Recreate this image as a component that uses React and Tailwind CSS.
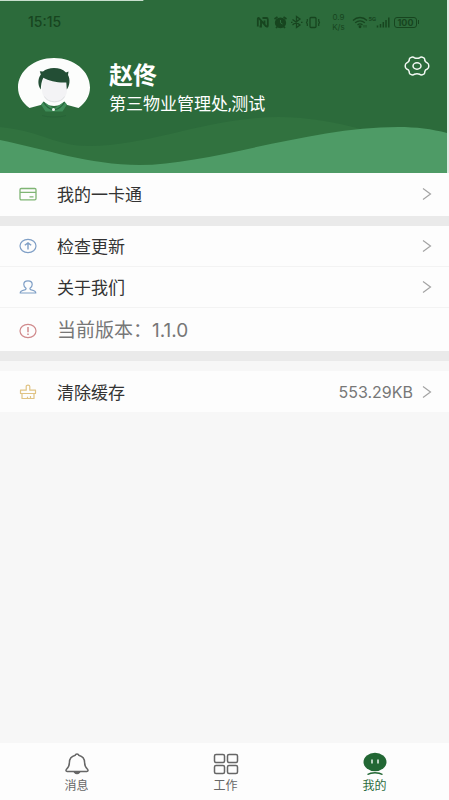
import React from "react";

const Chevron = () => (
  <svg className="h-4 w-3 shrink-0" viewBox="0 0 12 16" fill="none" stroke="#a3a3a3" strokeWidth="1.2" aria-hidden="true">
    <path d="M2 2.5 9.5 8 2 13.5" />
  </svg>
);

const CardIcon = () => (
  <svg className="h-5 w-5" viewBox="0 0 20 20" fill="none" stroke="#7fb574" strokeWidth="1.3" aria-hidden="true">
    <rect x="2" y="4.5" width="16" height="11.3" rx="1.2" />
    <path d="M2 8.3h16M11.5 12.8h4" />
  </svg>
);

const UpdateIcon = () => (
  <svg className="h-5 w-5" viewBox="0 0 20 20" fill="none" stroke="#7f9fc6" strokeWidth="1.2" aria-hidden="true">
    <ellipse cx="10" cy="10" rx="8" ry="6.6" />
    <path d="M10 13.6V7.2M6.8 9.3 10 6.9l3.2 2.4" strokeWidth="1.4" />
  </svg>
);

const PersonIcon = () => (
  <svg className="h-5 w-5" viewBox="0 0 20 20" fill="none" stroke="#7f9fc6" strokeWidth="1.2" strokeLinejoin="round" aria-hidden="true">
    <path d="M8 11.3C6.600 10.300 5.800 9 5.800 7.400c0-2.200 1.800-3.600 4.200-3.600s4.200 1.400 4.200 3.600c0 1.600-.8 2.900-2.200 3.900-.3.8.3 1.200 1.400 1.500 2.700.6 4.400 1.300 4.400 3.200H2.200c0-1.900 1.700-2.600 4.400-3.200 1.100-.3 1.700-.7 1.400-1.500Z" />
  </svg>
);

const InfoIcon = () => (
  <svg className="h-5 w-5" viewBox="0 0 20 20" fill="none" stroke="#d08a8c" strokeWidth="1.2" aria-hidden="true">
    <ellipse cx="10" cy="10" rx="8" ry="6.6" />
    <path d="M10 6v5.300M10 12.500v1.500" strokeWidth="1.5" />
  </svg>
);

const BrushIcon = () => (
  <svg className="h-5 w-5" viewBox="0 0 20 20" fill="none" stroke="#e0c384" strokeWidth="1.2" strokeLinejoin="round" aria-hidden="true">
    <path d="M8.200 8.200V4.400c0-.8.7-1.200 1.800-1.200s1.800.4 1.800 1.200v3.800h5.700v3.300h-15V8.200ZM4 11.500v5h12v-5M9.500 16.300v-1.500M12.500 16.300v-2.300" />
  </svg>
);

const GearIcon = () => (
  <svg className="h-6 w-7" viewBox="0 0 28 24" fill="none" stroke="#f2f8f3" strokeWidth="1.5" strokeLinejoin="round" aria-hidden="true">
    <path d="M8.800 3.200Q10.200 2.800 11.300 3.700Q14 5 16.700 3.700Q17.800 2.800 19.200 3.200L21.200 4.200Q22 5 21.700 6.200Q22 8.300 24.300 8.900Q25.800 9.600 25.800 12Q25.800 14.400 24.300 15.100Q22 15.700 21.700 17.800Q22 19 21.200 19.800L19.200 20.800Q17.800 21.200 16.700 20.300Q14 19 11.300 20.300Q10.200 21.200 8.800 20.800L6.800 19.800Q6 19 6.300 17.800Q6 15.700 3.700 15.100Q2.200 14.400 2.200 12Q2.200 9.600 3.700 8.900Q6 8.300 6.300 6.200Q6 5 6.800 4.200Z" />
    <ellipse cx="14" cy="12" rx="4" ry="3.200" />
  </svg>
);

const Avatar = () => (
  <svg className="h-[60px] w-[72px] shrink-0" viewBox="0 0 72 60" role="img" aria-label="头像">
    <path d="M11.500 50C4.500 45 0 37.500 0 29.500C0 13 16 0 36 0s36 13 36 29.500C72 37.500 67.500 45 60.500 50L47.500 46.500 36 48 24.500 46.500Z" fill="#fcfdfc" />
    <path d="M24 57.500c7 2 17 2 24 0" fill="none" stroke="#286438" strokeWidth="1" />
    <path d="M25.500 43.500 36 50.500 46.500 43.500 49 46.500 44.500 53.500H27.500L23 46.500Z" fill="#3f8d59" />
    <path d="M25.500 44Q29 50.500 36 52Q43 50.500 46.500 44" fill="none" stroke="#28643d" strokeWidth="1.2" />
    <path d="M25 19.500 49 23V32C49 40 42.500 44.500 36.500 44.500S24 40 24 32Z" fill="#f3f3f5" />
    <path d="M26.500 38.500c3 7 17 7 20 0" fill="none" stroke="#dfe2e3" strokeWidth="1" />
    <path d="M22.800 31.500C19.600 27 19.600 21 22.800 16.500L21.800 13.200 25 13.500C30 8.800 43 8.600 48 14.500L50.500 13.600 50 17C52.500 21.500 51.800 27.500 48.800 31.500L48.300 24.500C40 25 31 23 25.300 19.800C23.500 23.500 23 27 22.800 31.500Z" fill="#234e35" />
    <circle cx="35.500" cy="51.500" r="1.500" fill="#eef7ef" />
  </svg>
);

const StatusIcons = () => (
  <div className="flex items-center text-[#17451f]">
    <svg className="h-4 w-[72px]" viewBox="0 0 72 16" fill="none" stroke="currentColor" strokeWidth="1.3" aria-hidden="true">
      <path d="M1.800 12.500V4.500Q1.800 3.700 3 4.200L8.500 10.500V6.500M6.500 4H10.500Q11.800 4 11.800 5.500V11.500Q11.800 13 10.500 12.500L5 6.500V12.500H3.500" strokeWidth="1.8" />
      <ellipse cx="24.500" cy="8.800" rx="5" ry="4.700" fill="currentColor" />
      <path d="m18.500 5 3-2M30.500 5l-3-2M20 14l1.500-1.500M29 14l-1.500-1.500" strokeWidth="1.700" />
      <path d="M24.500 6v2.800l2 1.200" stroke="#2c6b3b" strokeWidth="1" />
      <path d="m36.500 5.500 7.500 5.500-3.500 2.500v-11L44 5l-7.500 6M35 8.300h1.500M45 8.300h1.500" />
      <rect x="54" y="3.500" width="6" height="10" rx="1" />
      <path d="M51.300 5v2l-.8 1.500.8 1.500v2M62.700 5v2l.8 1.500-.8 1.500v2" strokeWidth="1.200" />
    </svg>
    <div className="flex w-5 flex-col items-center font-['Inter',sans-serif] text-[8px] leading-[10px]">
      <span>0.9</span>
      <span>K/s</span>
    </div>
    <svg className="ml-1 h-4 w-4" viewBox="0 0 16 16" fill="none" stroke="currentColor" strokeWidth="1.3" aria-hidden="true">
      <path d="M1 6.500c4-4 10-4 14 0M3.200 8.800c3-2.500 6.600-2.500 9.600 0M5.500 11c1.500-1.300 3.500-1.300 5 0" />
      <circle cx="8" cy="12.800" r=".8" fill="currentColor" />
      <path d="M12 11v2.500M14 11v2.500" strokeWidth=".8" />
    </svg>
    <span className="h-4 pt-px text-[6px] leading-[8px] font-bold">5G</span>
    <svg className="h-4 w-[14px]" viewBox="0 0 14 16" stroke="currentColor" strokeWidth="1.5" aria-hidden="true">
      <path d="M1.500 13.500v-2M4.500 13.500V10M7.300 13.500V8M10 13.500V6M12.800 13.500V3.500" />
    </svg>
    <div className="ml-1 flex items-center">
      <span className="flex h-[11px] w-[23px] items-center justify-center rounded-[3px] border border-current font-['Inter',sans-serif] text-[9px] leading-none font-bold">100</span>
      <span className="ml-px h-1 w-px bg-current" />
    </div>
  </div>
);

function Row({ icon, label, value }) {
  return (
    <button type="button" className="flex h-[41px] w-full items-center bg-[#fdfdfd] pr-4 pl-[18px] text-left">
      {icon}
      <span className="ml-[19px] flex-1 pt-0.5 text-[17px] leading-6 text-[#333333]">{label}</span>
      {value && <span className="mr-2 font-['Inter',sans-serif] text-[16px] leading-6 text-[#777777]">{value}</span>}
      <Chevron />
    </button>
  );
}

function Tab({ label, active, children }) {
  return (
    <button
      type="button"
      aria-current={active ? "page" : undefined}
      className={"flex flex-1 flex-col items-center pt-2 text-[12px] leading-4 " + (active ? "text-[#2b6b3c]" : "text-[#666666]")}
    >
      {children}
      <span className="mt-[3px]">{label}</span>
    </button>
  );
}

export default function App() {
  return (
    <div className="flex min-h-screen flex-col bg-[#f7f7f7] font-['Roboto','Noto_Sans_CJK_SC',sans-serif]">
      <header className="relative h-[173px] border-r-2 border-[#dfeae2] bg-[#2c6b3b] text-white">
        <svg className="absolute inset-0 h-full w-full" viewBox="0 0 449 173" preserveAspectRatio="none" aria-hidden="true">
          <path d="M0 127C45 132 55 146 90 146C150 146 210 117 280 117C310 117 340 123 362 129L449 140V173H0Z" fill="#31723f" />
          <path d="M0 140C45 149 90 165 140 165C210 165 310 127 400 127C418 127 434 129 449 133V173H0Z" fill="#4e9b66" />
          <path d="M0 .5H144" stroke="#c9dfce" />
        </svg>
        <div className="relative flex items-center justify-between pt-3 pr-7 pl-7">
          <time className="font-['Inter',sans-serif] text-[14px] leading-5 font-medium text-[#17451f]">15:15</time>
          <StatusIcons />
        </div>
        <div className="relative flex items-start pt-6 pr-4 pl-[18px]">
          <div className="pt-0.5">
            <Avatar />
          </div>
          <div className="ml-[19px] flex-1 pt-1">
            <h1 className="text-[24px] leading-8 font-bold">赵佟</h1>
            <p className="text-[17px] leading-6">第三物业管理处,测试</p>
          </div>
          <button type="button" aria-label="设置" className="-mt-0.5">
            <GearIcon />
          </button>
        </div>
      </header>

      <main className="flex flex-1 flex-col">
        <section className="border-b-[10px] border-[#eaeaea] bg-[#fdfdfd] pb-0.5">
          <Row icon={<CardIcon />} label="我的一卡通" />
        </section>
        <section className="divide-y divide-[#f3f3f3] border-b-[10px] border-b-[#eaeaea]">
          <Row icon={<UpdateIcon />} label="检查更新" />
          <Row icon={<PersonIcon />} label="关于我们" />
          <div className="flex h-[43px] items-center bg-[#fdfdfd] pt-0.5 pl-[18px]">
            <InfoIcon />
            <span className="ml-[19px] text-[19px] leading-6 text-[#777777]">当前版本：</span>
            <span className="font-['Inter',sans-serif] text-[19px] leading-6 text-[#777777]">1.1.0</span>
          </div>
        </section>
        <section className="pt-[10px]">
          <Row icon={<BrushIcon />} label="清除缓存" value="553.29KB" />
        </section>
      </main>

      <nav className="flex h-[57px] bg-[#fdfdfd] pl-0.5" aria-label="主导航">
        <Tab label="消息">
          <svg className="h-6 w-6" viewBox="0 0 24 24" fill="none" stroke="#666666" strokeWidth="1.5" strokeLinejoin="round" aria-hidden="true">
            <path d="M12 3C10.800 3 10.400 3.600 10.300 4.200C6.500 5.200 4.400 8 4.400 11.500C4.400 14.800 3.600 16.300 1.500 18.200Q.2 20.300 2.200 20.500H21.800Q23.800 20.300 22.500 18.200C20.400 16.300 19.600 14.800 19.600 11.500C19.600 8 17.500 5.200 13.700 4.200C13.600 3.600 13.200 3 12 3Z" />
            <path d="M9.500 21.200Q12 24 14.500 21.200Z" fill="#666666" />
          </svg>
        </Tab>
        <Tab label="工作">
          <svg className="h-6 w-[26px]" viewBox="0 0 26 24" fill="none" stroke="#666666" strokeWidth="1.5" aria-hidden="true">
            <rect x="1.500" y="3.500" width="10" height="8" rx="1.500" />
            <rect x="14.500" y="3.500" width="10" height="8" rx="1.500" />
            <rect x="1.500" y="14.500" width="10" height="8" rx="1.500" />
            <rect x="14.500" y="14.500" width="10" height="8" rx="1.500" />
          </svg>
        </Tab>
        <Tab label="我的" active>
          <svg className="h-6 w-6" viewBox="0 0 24 24" aria-hidden="true">
            <ellipse cx="12" cy="11" rx="11.500" ry="9.200" fill="#226734" />
            <path d="M9 8.500v4M15 8.500v4" stroke="#e9f3eb" strokeWidth="1.500" />
            <path d="M4.500 23.500C8 21 16 21 19.500 23.500" fill="none" stroke="#226734" strokeWidth="1.500" />
          </svg>
        </Tab>
      </nav>
    </div>
  );
}
